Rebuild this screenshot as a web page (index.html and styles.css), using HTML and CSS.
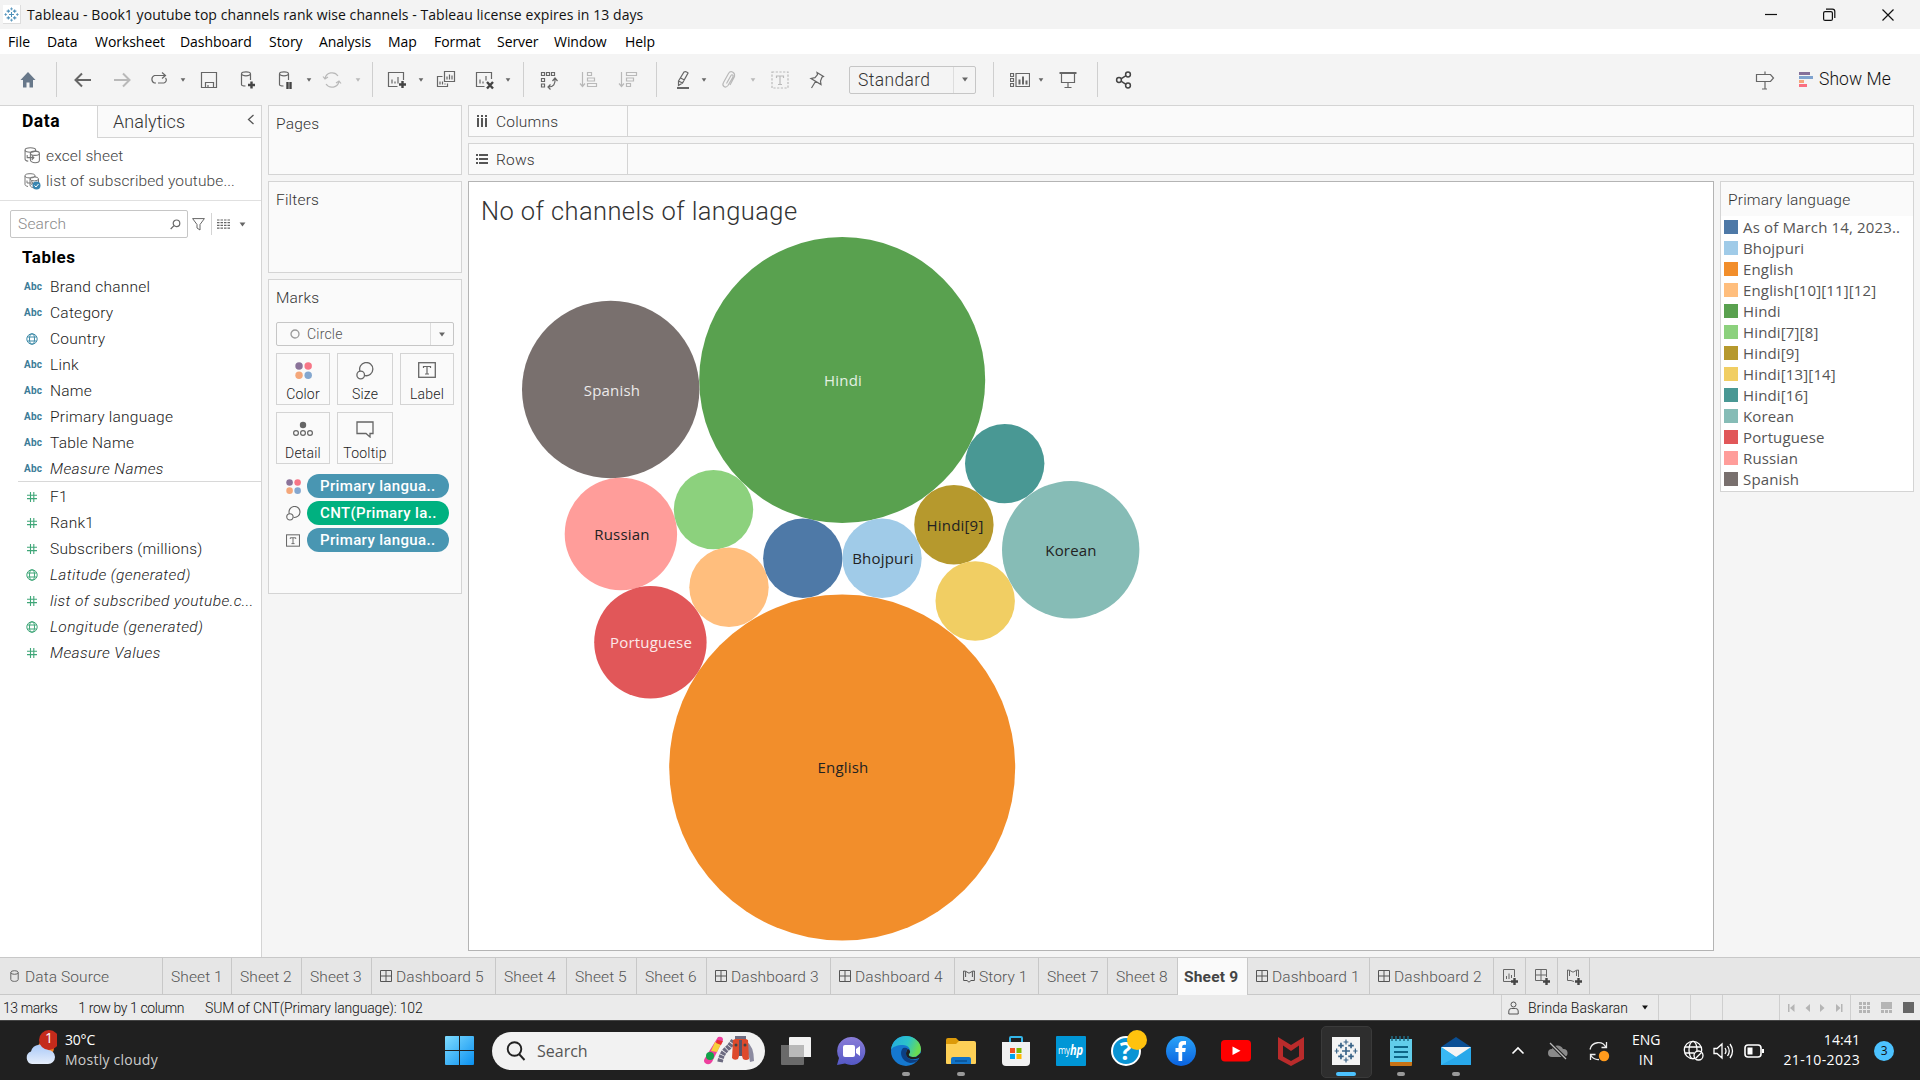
FILE: index.html
```html
<!DOCTYPE html>
<html lang="en">
<head>
<meta charset="utf-8">
<title>Tableau - Book1</title>
<link rel="stylesheet" href="styles.css">
</head>
<body>
<svg class="defs" width="0" height="0">
  <symbol id="caret" viewBox="0 0 8 6"><path d="M0.5 0.5h7L4 5.5z" fill="currentColor"/></symbol>
  <symbol id="logo" viewBox="0 0 20 20"><g stroke="currentColor" fill="none"><path stroke-width="1.4" d="M10 6.7v6.6M6.7 10h6.6M5.8 3.2v4.6M3.5 5.5h4.6M14.2 3.2v4.6M11.9 5.5h4.6M5.8 12.2v4.6M3.5 14.5h4.6M14.2 12.2v4.6M11.9 14.5h4.6"/><path stroke-width="1" d="M10 .5v4M8 2.5h4M10 15.5v4M8 17.5h4M2.2 8v4M.5 10h3.6M17.8 8v4M16 10h3.6"/></g></symbol>
  <symbol id="globe" viewBox="0 0 12 12"><g fill="none" stroke="currentColor"><circle cx="6" cy="6" r="5.2"/><ellipse cx="6" cy="6" rx="2.5" ry="5.2"/><path d="M1.4 4h9.2M1.4 8h9.2"/></g></symbol>
  <symbol id="hash" viewBox="0 0 12 12"><path d="M4.5 1v10M7.8 1v10M1 4.3h10M1 7.6h10" stroke="currentColor" stroke-width="1.1" fill="none"/></symbol>
  <symbol id="grid" viewBox="0 0 12 12"><path d="M.5.5h11v11H.5zM6 .5v11M.5 6h11" stroke="currentColor" fill="none"/></symbol>
  <symbol id="story" viewBox="0 0 12 13"><path d="M.6 10.500V1l2 .3V7M11.400 10.500V1l-2 .3V7M2.600 1.300L6 3.200l3.400-1.900M.6 10.500H4l2 1.700 2-1.700h3.400" stroke="currentColor" fill="none"/></symbol>
  <symbol id="size" viewBox="0 0 18 18"><g fill="none" stroke="currentColor" stroke-width="1.3"><path d="M4 9.300A6.600 6.600 0 1 1 9 13.600"/><circle cx="4.700" cy="13" r="3.800"/></g></symbol>
  <symbol id="tbox" viewBox="0 0 18 16"><rect x=".7" y=".7" width="16.600" height="14.600" fill="none" stroke="currentColor" stroke-width="1.300"/><path d="M5.500 6V4.500h7V6M9 4.500V12M7 12h4" stroke="currentColor" fill="none" stroke-width="1.200"/></symbol>
  <symbol id="dots" viewBox="0 0 16 16"><circle cx="3.800" cy="3.800" r="3.500" fill="#8a7399"/><circle cx="12.400" cy="3.800" r="3.500" fill="#f77687"/><circle cx="3.800" cy="12.400" r="3.500" fill="#f4a77a"/><circle cx="12.400" cy="12.400" r="3.500" fill="#84a7cf"/></symbol>
  <symbol id="ds" viewBox="0 0 16 16"><g fill="none" stroke="#777"><path d="M4 13.500C2 13 1 12.500 1 11.500V3M11 4V3"/><ellipse cx="6" cy="2.800" rx="5" ry="2.100"/><path d="M6 5.500v6.500c0 1.500 2 2.800 4.500 2.800s4-1 4-2.300V6"/><ellipse cx="10.300" cy="5.900" rx="4.200" ry="2"/><path d="M3 7.500v2.500h6M7.300 8l2 2-2 2"/></g></symbol>
</svg>

<header class="titlebar">
  <span class="applogo"><svg width="15" height="15"><use href="#logo"/></svg></span>
  <span class="apptitle">Tableau - Book1 youtube top channels rank wise channels - Tableau license expires in 13 days</span>
  <svg class="winbtns" width="130" height="14" viewBox="0 0 130 14" fill="none" stroke="#111" stroke-width="1.200"><path d="M0 6.500h12"/><rect x="58.600" y="3.600" width="8.800" height="8.800" rx="1.500"/><path d="M61 1.200h6.500q2.300 0 2.300 2.300V10"/><path d="M117.500 1.500l11 11M128.500 1.500l-11 11"/></svg>
</header>

<nav class="menubar">
  <span>File</span><span>Data</span><span>Worksheet</span><span>Dashboard</span><span>Story</span><span>Analysis</span><span>Map</span><span>Format</span><span>Server</span><span>Window</span><span>Help</span>
</nav>

<div class="toolbar">
  <svg class="ic g18"><path d="M10 2L2.500 10h2.500v7.500h3.500v-5h3v5H15V10h2.500z" fill="#68788a"/></svg>
  <i class="sep g18"></i>
  <svg class="ic g16 thick"><path d="M18 10H3M9 3.500L2.500 10 9 16.500"/></svg>
  <svg class="ic g19 thick off"><path d="M2 10h15M11 3.500l6.500 6.500-6.500 6.500"/></svg>
  <svg class="ic g17"><path d="M7 13H5.500a4 4 0 0 1 0-7.500H16M13 2.500l3.500 3-3.500 3M16.500 8a3 3 0 0 1-1.500 5H9"/></svg>
  <svg class="car g10"><use href="#caret"/></svg>
  <svg class="ic g12"><path d="M2.500 2.500h15v15h-15zM6.500 17.500v-5h8v5M9 17.500v-2.500"/></svg>
  <svg class="ic g19"><path d="M3.500 4v10.500c0 1 1.800 1.500 4 1.500M12.500 4v6"/><ellipse cx="8" cy="3.800" rx="4.500" ry="2"/><path class="bold" d="M13.500 11.500v7M10 15h7"/></svg>
  <svg class="ic g18"><path d="M3.500 4v10.500c0 1 1.800 1.500 4 1.500M12.500 4v6"/><ellipse cx="8" cy="3.800" rx="4.500" ry="2"/><path class="bold" d="M11.500 12v7M14.500 12v7"/></svg>
  <svg class="car g9"><use href="#caret"/></svg>
  <svg class="ic g9 off"><path d="M3 8.500a7.200 7.200 0 0 1 13-2.500M17 11.500a7.200 7.200 0 0 1-13 2.500M1 6.500l2 2.500 3-2M19 13.500L17 11l-3 2"/></svg>
  <svg class="car g12 off"><use href="#caret"/></svg>
  <i class="sep g10"></i>
  <svg class="ic g14"><path d="M10.500 16.500h-9v-14h15V10M5 13.500v-4M8 13.500v-2M11 13.500V7"/><path class="bold" d="M15.500 11v7M12 14.500h7"/></svg>
  <svg class="car g10"><use href="#caret"/></svg>
  <svg class="ic g11"><path d="M8.500 1.500h10v10h-10zM11 9.500v-3M13.500 9.500V4.500M16 9.500v-4M6.500 6.500h-5v10h10v-3M4 14.500v-3M6.500 14.500v-3M9 14.500v-1"/></svg>
  <svg class="ic g19"><path d="M9.500 16.500h-8v-14h15V9M5 13.500v-4M8 13.500v-2M11 10.500V6"/><path class="bold" d="M12 12l6 6.500M18 12l-6 6.500"/></svg>
  <svg class="car g9"><use href="#caret"/></svg>
  <i class="sep g11"></i>
  <svg class="ic g15"><path d="M2.500 2.500h3v3h-3zM7.500 2.500h3v3h-3zM12.500 2.500h3v3h-3zM2.500 8.500h3v3h-3zM2.500 14h3v3h-3zM9.500 17c5 0 7-3 6.500-8.500M13.500 11L16 8l2.500 3M11.500 14.500l-2.500 2.500 2.500 2.500"/></svg>
  <svg class="ic g20 off"><path d="M3.500 2v14M1 13.500L3.500 16.500 6 13.500M8.500 2.500h4v3h-4zM8.500 8h7v3h-7zM8.500 13.500h9v3h-9z"/></svg>
  <svg class="ic g19 off"><path d="M3.500 2v14M1 13.500L3.500 16.500 6 13.500M8.500 2.500h10v3h-10zM8.500 8h7v3h-7zM8.500 13.500h4v3h-4z"/></svg>
  <i class="sep g18"></i>
  <svg class="ic g16"><path d="M5.500 11L11 2q2-1 4 1L9.500 13l-4 2.500zM5.500 11l4 2M7.500 8l4 2"/><path d="M4 18h12" stroke-width="2"/></svg>
  <svg class="car g7"><use href="#caret"/></svg>
  <svg class="ic g11 off"><path d="M7.500 13.500l4.500-8q1-1.500 2 0v1.500L9 15.500q-2 2.500-4 1t-.5-4l5-9q1.500-2.500 4-1.500t2 4.500L11 15"/></svg>
  <svg class="car g10 off"><use href="#caret"/></svg>
  <svg class="ic g13 off"><path stroke-dasharray="2.200 1.500" d="M2 2h16v16H2z"/><path d="M6.500 8V6h7v2M10 6v8.500M8 14.500h4"/></svg>
  <svg class="ic g17"><path d="M10 2.500l6.500 4-1.500.8-1.500 3.700.5 3.500L4 8.500l4-.8 2.500-3zM8.500 11.500l-4 6.500"/></svg>
  <div class="combo g22"><span>Standard</span><svg class="car"><use href="#caret"/></svg></div>
  <i class="sep g17"></i>
  <svg class="ic g16"><path d="M.5 3.500h3v3h-3zM.5 8.500h3v3h-3zM.5 13.500h3v3h-3zM6 3.500h13.500v13H6z"/><path stroke-width="2" d="M9.500 14.500v-5M13 14.500V6.500M16.500 14.500v-4"/></svg>
  <svg class="car g7"><use href="#caret"/></svg>
  <svg class="ic g13"><path stroke-width="2" d="M1.500 3h17"/><path d="M3.500 3v9.500h13V3M10 12.500v5M6.500 17.500h7"/></svg>
  <i class="sep g19"></i>
  <svg class="ic g16 share"><circle cx="5" cy="10" r="2.400"/><circle cx="14" cy="4.500" r="2.400"/><circle cx="14" cy="15.500" r="2.400"/><path d="M7 8.800L12 5.700M7 11.200l5 3.100"/></svg>
  <svg class="ic guide"><path d="M1.500 4.500h14l3 3.500-3 3.500h-14zM10 1.500v3M10 11.500v8M7 19h5"/></svg>
  <svg class="g24" width="14" height="16"><path fill="#85709a" d="M0 0h11v3H0z"/><path fill="#7fa3cf" d="M0 4h14v3H0z"/><path fill="#f5a57a" d="M0 8h5v3H0z"/><path fill="#fa6f80" d="M0 12h8v3H0z"/></svg>
  <span class="showme">Show Me</span>
</div>

<main class="work">
  <aside class="datapane">
    <div class="tabs"><b>Data</b><span>Analytics<svg width="8" height="12"><path d="M6.500 1L1.500 5.500l5 4.500" fill="none" stroke="#555" stroke-width="1.300"/></svg></span></div>
    <div class="sources">
      <div><svg width="16" height="17" viewBox="0 0 16 16"><use href="#ds"/></svg>excel sheet</div>
      <div><svg width="17" height="17" viewBox="0 0 17 17"><use href="#ds" width="16" height="16"/><circle cx="12.500" cy="12.500" r="4" fill="#3a86b0"/><path d="M10.500 12.500l1.500 1.500 2.500-3" stroke="#fff" fill="none"/></svg>list of subscribed youtube...</div>
    </div>
    <div class="searchrow">
      <div class="search">Search<svg width="11" height="11"><circle cx="6.500" cy="4.300" r="3.300"/><path d="M4 6.700L.7 10"/></svg></div>
      <svg width="13" height="13"><path d="M.6.600h11.800L8 6.500V12L5 10V6.500z"/></svg>
      <i></i>
      <svg width="13" height="10"><path stroke-dasharray="2.500 1" stroke-width="1.200" d="M0 1h13M0 3.700h13M0 6.400h13M0 9.100h13"/></svg>
      <svg class="car"><use href="#caret"/></svg>
    </div>
    <h2>Tables</h2>
    <ul class="dims">
      <li><em>Abc</em>Brand channel</li>
      <li><em>Abc</em>Category</li>
      <li><svg><use href="#globe"/></svg>Country</li>
      <li><em>Abc</em>Link</li>
      <li><em>Abc</em>Name</li>
      <li><em>Abc</em>Primary language</li>
      <li><em>Abc</em>Table Name</li>
      <li class="gen"><em>Abc</em>Measure Names</li>
    </ul>
    <ul class="meas">
      <li><svg><use href="#hash"/></svg>F1</li>
      <li><svg><use href="#hash"/></svg>Rank1</li>
      <li><svg><use href="#hash"/></svg>Subscribers (millions)</li>
      <li class="gen"><svg><use href="#globe"/></svg>Latitude (generated)</li>
      <li class="gen"><svg><use href="#hash"/></svg>list of subscribed youtube.c...</li>
      <li class="gen"><svg><use href="#globe"/></svg>Longitude (generated)</li>
      <li class="gen"><svg><use href="#hash"/></svg>Measure Values</li>
    </ul>
  </aside>

  <section class="cards">
    <div class="card pages">Pages</div>
    <div class="card filters">Filters</div>
    <div class="card marks">
      Marks
      <div class="marktype"><svg width="10" height="10"><circle cx="5" cy="5" r="4" fill="none" stroke="#999" stroke-width="1.300"/></svg><span>Circle</span><svg class="car"><use href="#caret"/></svg></div>
      <div class="shelf">
        <div><svg width="17" height="17"><use href="#dots"/></svg>Color</div>
        <div><svg width="18" height="18"><use href="#size"/></svg>Size</div>
        <div><svg width="18" height="16"><use href="#tbox"/></svg>Label</div>
        <div><svg width="20" height="16"><circle cx="10" cy="4" r="3.200" fill="#666"/><g fill="none" stroke="#666" stroke-width="1.200"><circle cx="3" cy="12" r="2.400"/><circle cx="10" cy="12" r="2.400"/><circle cx="17" cy="12" r="2.400"/></g></svg>Detail</div>
        <div><svg width="18" height="17"><path d="M1 1h16v11.500h-3V16l-4-3.500H1z" fill="none" stroke="#666" stroke-width="1.300"/></svg>Tooltip</div>
      </div>
      <div class="pills">
        <div><svg width="15" height="15"><use href="#dots"/></svg><span>Primary langua..</span></div>
        <div><svg width="15" height="15"><use href="#size"/></svg><span class="green">CNT(Primary la..</span></div>
        <div><svg width="14" height="13"><use href="#tbox"/></svg><span>Primary langua..</span></div>
      </div>
    </div>
  </section>

  <section class="stage">
    <div class="axis"><b><svg width="12" height="12"><path fill="#555" d="M1 0h2v2H1zM5 0h2v2H5zM9 0h2v2H9zM1 3h2v9H1zM5 3h2v9H5zM9 3h2v9H9z"/></svg>Columns</b></div>
    <div class="axis"><b><svg width="12" height="12"><path fill="#555" d="M0 1h2v2H0zM0 5h2v2H0zM0 9h2v2H0zM3 1h9v2H3zM3 5h9v2H3zM3 9h9v2H3z"/></svg>Rows</b></div>
    <div class="row">
      <div class="view">
        <h1>No of channels of language</h1>
        <svg class="bubbles" width="1244" height="713" viewBox="469 237 1244 713">
          <circle cx="842.200" cy="380" r="143" fill="#59a14f"/>
          <circle cx="842.200" cy="767.500" r="173" fill="#f28e2b"/>
          <circle cx="610.700" cy="389.500" r="88.700" fill="#79706e"/>
          <circle cx="620.900" cy="534" r="56.200" fill="#ff9d9a"/>
          <circle cx="650.400" cy="642.300" r="56.200" fill="#e15759"/>
          <circle cx="713.500" cy="509.600" r="39.700" fill="#8cd17d"/>
          <circle cx="729" cy="587.300" r="39.700" fill="#ffbe7d"/>
          <circle cx="802.800" cy="558.300" r="39.700" fill="#4e79a7"/>
          <circle cx="882" cy="558.300" r="39.700" fill="#a0cbe8"/>
          <circle cx="953.900" cy="524.700" r="39.700" fill="#b6992d"/>
          <circle cx="975.200" cy="601" r="39.700" fill="#f1ce63"/>
          <circle cx="1004.700" cy="463.600" r="39.700" fill="#499894"/>
          <circle cx="1070.700" cy="549.800" r="68.700" fill="#86bcb6"/>
          <g class="lbl">
            <text x="843" y="386" fill="#e4f0e3">Hindi</text>
            <text x="612" y="396" fill="#eceaea">Spanish</text>
            <text x="651" y="648" fill="#fce9e9">Portuguese</text>
            <text x="622" y="540">Russian</text>
            <text x="883" y="564">Bhojpuri</text>
            <text x="955" y="531">Hindi[9]</text>
            <text x="1071" y="556">Korean</text>
            <text x="843" y="773">English</text>
          </g>
        </svg>
      </div>
      <aside class="legend">
        <h3>Primary language</h3>
        <ul>
          <li><i class="c1"></i>As of March 14, 2023..</li>
          <li><i class="c2"></i>Bhojpuri</li>
          <li><i class="c3"></i>English</li>
          <li><i class="c4"></i>English[10][11][12]</li>
          <li><i class="c5"></i>Hindi</li>
          <li><i class="c6"></i>Hindi[7][8]</li>
          <li><i class="c7"></i>Hindi[9]</li>
          <li><i class="c8"></i>Hindi[13][14]</li>
          <li><i class="c9"></i>Hindi[16]</li>
          <li><i class="c10"></i>Korean</li>
          <li><i class="c11"></i>Portuguese</li>
          <li><i class="c12"></i>Russian</li>
          <li><i class="c13"></i>Spanish</li>
        </ul>
      </aside>
    </div>
  </section>
</main>

<div class="sheets">
  <span class="first"><svg width="9" height="12"><g fill="none" stroke="#666"><ellipse cx="4.500" cy="2.500" rx="3.700" ry="1.800"/><path d="M.8 2.500v7c0 2.500 7.400 2.500 7.400 0v-7"/></g></svg>Data Source</span>
  <span>Sheet 1</span><span>Sheet 2</span><span>Sheet 3</span>
  <span><svg width="12" height="12"><use href="#grid"/></svg>Dashboard 5</span>
  <span>Sheet 4</span><span>Sheet 5</span><span>Sheet 6</span>
  <span><svg width="12" height="12"><use href="#grid"/></svg>Dashboard 3</span>
  <span><svg width="12" height="12"><use href="#grid"/></svg>Dashboard 4</span>
  <span><svg width="12" height="13"><use href="#story"/></svg>Story 1</span>
  <span>Sheet 7</span><span>Sheet 8</span><span class="active">Sheet 9</span>
  <span><svg width="12" height="12"><use href="#grid"/></svg>Dashboard 1</span>
  <span><svg width="12" height="12"><use href="#grid"/></svg>Dashboard 2</span>
  <span class="add"><svg width="16" height="16"><path d="M8.500 12.500h-8v-12h11V8M3.500 10V7M6 10V4.500M8.500 9V6"/><path class="bold" d="M11.500 9v7M8 12.500h7"/></svg></span>
  <span class="add"><svg width="16" height="16"><path d="M8 11.500H.5V.5h11V8M6 .5v11M.5 6h11"/><path class="bold" d="M11.500 9v7M8 12.500h7"/></svg></span>
  <span class="add"><svg width="16" height="16"><path d="M7 12.500L4 11.500H.5V1l2 .3V7M2.500 1.300L6 3.200l3.500-1.900V7M9.500 1.300l2-.3v7"/><path class="bold" d="M11.500 9v7M8 12.500h7"/></svg></span>
</div>

<div class="status">
  <span>13 marks</span><span>1 row by 1 column</span><span class="sum">SUM of CNT(Primary language): 102</span>
  <div class="user"><svg width="11" height="14"><g fill="none" stroke="#555"><circle cx="5.500" cy="3.500" r="2.500"/><path d="M.8 13V10q0-2.500 2.500-2.500h4.400q2.500 0 2.500 2.500v3z"/></g></svg>Brinda Baskaran<svg class="car"><use href="#caret"/></svg></div>
  <i></i><i></i><i class="wide"></i>
  <div class="nav"><svg width="60" height="8" viewBox="0 0 60 8" fill="#b5b5b5"><path d="M0 0h1.500v8H0zM6.500 0v8L2 4zM22 0v8L17.500 4zM32 0v8l4.500-4zM48 0v8l4.500-4zM53 0h1.500v8H53z"/></svg></div>
  <div class="modes"><svg width="56" height="11" viewBox="0 0 56 11"><path fill="#b5b5b5" d="M0 0h3v3H0zM4 0h3v3H4zM8 0h3v3H8zM0 4h3v3H0zM4 4h3v3H4zM8 4h3v3H8zM0 8h3v3H0zM4 8h3v3H4zM8 8h3v3H8zM22 0h11v7H22zM22 8h3v3h-3zM26 8h3v3h-3zM30 8h3v3h-3z"/><path fill="#666" d="M44 0h11v11H44z"/></svg></div>
</div>

<footer class="taskbar">
  <div class="weather">
    <svg width="32" height="38" viewBox="0 0 32 38"><defs><linearGradient id="cl" x2="0" y2="1"><stop offset="0" stop-color="#a9c9f8"/><stop offset="1" stop-color="#e6eefb"/></linearGradient></defs><circle cx="21" cy="18" r="8" fill="#f58220"/><path d="M7 34a6.500 6.500 0 0 1-1-12.500 9 9 0 0 1 17-1.500 7 7 0 0 1 0 14z" fill="url(#cl)"/><circle cx="24" cy="10" r="10" fill="#c42b1c"/><text x="24" y="13" text-anchor="middle" fill="#fff" font-size="14">1</text></svg>
    <p>30°C<br><span>Mostly cloudy</span></p>
  </div>
  <svg class="start" width="29" height="29"><defs><linearGradient id="wn" x2="1" y2="1"><stop offset="0" stop-color="#7fdcff"/><stop offset="1" stop-color="#0a90f0"/></linearGradient></defs><path fill="url(#wn)" d="M0 1q0-1 1-1h13v14H0zM15 0h13q1 0 1 1v13H15zM0 15h14v14H1q-1 0-1-1zM15 15h14v13q0 1-1 1H15z"/></svg>
  <div class="tsearch">
    <svg width="20" height="20" fill="none" stroke="#222" stroke-width="1.900"><circle cx="8.500" cy="8" r="6.800"/><path d="M13 13l5.500 6"/></svg><span>Search</span>
    <svg width="54" height="30" viewBox="0 0 54 30"><path d="M15 1q5-1 5 3L9 26q-3 4-7 1-2-2 0-5z" fill="#ee3f9e"/><path d="M12 6l6 2-4 8-6-1z" fill="#f6d13c"/><circle cx="7" cy="20" r="4" fill="#12a24a"/><path d="M14 4l6 1-2 4-5-2z" fill="#e83030"/><path d="M17 26q2-10 9-15l5-7" stroke="#6b6a80" stroke-width="5.500" fill="none" stroke-dasharray="3 .8"/><path d="M43 5q8 5 8 20l-4 1q-1-9-6-13z" fill="#8c8ba0"/><path d="M30 4q8-5 15 0l1 19q-3 2-6 0l-1-3h-3l-1 3q-4 2-6-1z" fill="#de4a2c"/><path d="M37.500 4v16" stroke="#5a5468" stroke-width="3"/><path d="M32 1.500h11" stroke="#6f6d82" stroke-width="3"/><circle cx="33" cy="9" r="1.500" fill="#444"/><circle cx="42" cy="9" r="1.500" fill="#444"/></svg>
  </div>
  <div class="apps">
    <div><svg viewBox="0 0 30 30"><path d="M0 9h23v19q0 1-1 1H1q-1 0-1-1z" fill="#6a6a6a"/><path d="M8 2q0-1 1-1h20q1 0 1 1v19H8z" fill="#f2f2f2"/><path d="M8 9h15v12H8z" fill="#b9b9b9"/></svg></div>
    <div><svg viewBox="0 0 30 30"><defs><linearGradient id="ch" x2="0" y2="1"><stop offset="0" stop-color="#8a7dd8"/><stop offset="1" stop-color="#5458c5"/></linearGradient></defs><path d="M15 1a14 14 0 1 1-6 26.500L1 29l2-7A14 14 0 0 1 15 1z" fill="url(#ch)"/><rect x="7" y="9" width="12" height="12" rx="2" fill="#fff"/><path d="M20 13l4-3v10l-4-3z" fill="#fff"/></svg></div>
    <div class="run"><svg viewBox="0 0 30 30"><defs><linearGradient id="e1" x2="1" y2=".3"><stop offset="0" stop-color="#23a9e2"/><stop offset=".6" stop-color="#2cc4c9"/><stop offset="1" stop-color="#6adb52"/></linearGradient></defs><circle cx="15" cy="15" r="15" fill="#1578cf"/><path d="M0 14C1 5 7 0 15 0s15 6 15 13c0 5-4 8-8 8-3 0-5-1-4-3 3-5-1-9-6-9C6 9 1 11 0 14z" fill="url(#e1)"/><path d="M12 12c-4 4-2 13 7 15 4 0 6-1 9-4-5 2-13 1-13-6 0-2 1-3 2-4q-2-2-5-1z" fill="#0c3f83"/><path d="M17 13c-3 3-3 9 3 10 4 1 8-1 10-2l2-6-7 6c-3 0-8 0-7-3 2-2 1-4-1-5z" fill="#202020"/></svg></div>
    <div class="run"><svg viewBox="0 0 30 30"><path d="M0 4q0-2 2-2h8l3 3v6H0z" fill="#dc9a0a"/><path d="M0 8l10 0 3-3h15q2 0 2 2v20q0 1-1 1H1q-1 0-1-1z" fill="#fdd057"/><path d="M5 28v-5q0-2 2-2h16q2 0 2 2v5z" fill="#1173c7"/><path d="M9 25h12" stroke="#0a4f91" stroke-width="1.500"/></svg></div>
    <div><svg viewBox="0 0 30 30"><path d="M9 7V2q0-1 1-1h10q1 0 1 1v5" stroke="#33b5e8" stroke-width="2" fill="none"/><path d="M1 6h28v20q0 4-4 4H5q-4 0-4-4z" fill="#f1f1f1"/><path fill="#f25022" d="M9 12h5v5H9z"/><path fill="#7fba00" d="M15.500 12h5v5h-5z"/><path fill="#00a4ef" d="M9 18h5v5H9z"/><path fill="#ffb900" d="M15.500 18h5v5h-5z"/></svg></div>
    <div><svg viewBox="0 0 30 30"><rect width="30" height="30" rx="1" fill="#0096d6"/><text x="2" y="18" font-size="10" fill="#fff" textLength="12" lengthAdjust="spacingAndGlyphs">my</text><text x="14" y="19" font-size="14" font-weight="700" font-style="italic" fill="#fff" textLength="13" lengthAdjust="spacingAndGlyphs">hp</text></svg></div>
    <div><svg viewBox="0 0 30 30" overflow="visible"><circle cx="15" cy="15" r="14" fill="#0a94d4" stroke="#fff" stroke-width="2"/><text x="14.500" y="24" font-size="25" font-weight="700" text-anchor="middle" fill="#fff">?</text><circle cx="26" cy="4" r="10" fill="#ffc20e"/></svg></div>
    <div><svg viewBox="0 0 30 30"><defs><linearGradient id="fb" x2="0" y2="1"><stop offset="0" stop-color="#2aa4f8"/><stop offset="1" stop-color="#0a62e0"/></linearGradient></defs><circle cx="15" cy="15" r="15" fill="url(#fb)"/><path d="M12.500 25v-9H9.500v-4h3V9.500q0-4.500 4.500-4.500h3v3.800h-2q-1.800 0-1.800 1.700V12h3.600l-.6 4h-3v9z" fill="#fff"/></svg></div>
    <div><svg viewBox="0 0 30 30"><rect y="4" width="30" height="21.500" rx="4" fill="#f00"/><path d="M11.500 10.500v8.500l8-4.200z" fill="#fff"/></svg></div>
    <div><svg viewBox="0 0 30 30"><path d="M2 1l13 8 13-8v22L15 30 2 23zM7 9.500v11L15 25l8-4.500v-11L15 15z" fill="#b92b2b" fill-rule="evenodd"/></svg></div>
    <div class="on"><svg viewBox="0 0 30 30"><path d="M1 1h28v28H1z" fill="#f4f4f4"/><svg x="3" y="3" width="24" height="24" color="#3a6488"><use href="#logo"/></svg></svg></div>
    <div class="run"><svg viewBox="0 0 30 30"><path d="M4 3h22v24H4z" fill="#62cdea"/><path d="M4 26h22v3q0 1-1 1H5q-1 0-1-1z" fill="#c87316"/><path d="M8 11h14M8 16h14M8 21h14" stroke="#0d6688" stroke-width="2"/><path d="M6 0v5M10 0v5M14 0v5M18 0v5M22 0v5" stroke="#1f6c86" stroke-width="1.500"/></svg></div>
    <div class="run"><svg viewBox="0 0 30 30"><path d="M0 11L15 1l15 10v5H0z" fill="#0a4f94"/><path d="M0 11h30v18H0z" fill="#28a8ea"/><path d="M0 11h30L15 21z" fill="#f4f4f4"/><path d="M0 11l15 10L0 29z" fill="#38b8f4"/></svg></div>
  </div>
  <div class="tray">
    <svg class="t1" width="14" height="9"><path d="M1.500 7.500L7 2l5.500 5.500" fill="none" stroke="#fff" stroke-width="1.600"/></svg>
    <svg class="t2" width="22" height="18"><path d="M5 15a4 4 0 0 1 0-8 6 6 0 0 1 11 0 4 4 0 0 1 1 8z" fill="#8a8a8a"/><path d="M3 1l16 16" stroke="#202020" stroke-width="3.500"/><path d="M3 1l16 16" stroke="#bbb" stroke-width="1.200"/></svg>
    <svg class="t3" width="22" height="22"><path d="M2 9.500a8.500 8.500 0 0 1 16-2M18.500 2v5.500h-5M11 19.500a8.500 8.500 0 0 1-8-4M2.500 20v-5.500h5" fill="none" stroke="#eee" stroke-width="1.300"/><circle cx="16" cy="16" r="5.200" fill="#ff9a1c"/></svg>
    <p class="lang">ENG<br>IN</p>
    <svg class="t4" width="22" height="22" fill="none" stroke="#fff" stroke-width="1.300"><circle cx="10" cy="10" r="8.700"/><ellipse cx="10" cy="10" rx="4" ry="8.700"/><path d="M2 7h16M2 13h9"/><circle cx="15.500" cy="15.500" r="4.500" fill="#202020"/><path d="M12.500 18.500l6-6"/></svg>
    <svg class="t5" width="21" height="18" fill="none" stroke="#fff" stroke-width="1.300"><path d="M1 6.500h3l5-4.500v14l-5-4.500H1zM12 6q2 3 0 6M14.500 4q3.500 5 0 10M17 2q5 7 0 14"/></svg>
    <svg class="t6" width="21" height="14"><rect x="1" y="1" width="16" height="12" rx="3" fill="none" stroke="#fff" stroke-width="1.600"/><path d="M3.500 3.500h5v7h-5zM18 5h2v4h-2z" fill="#fff"/></svg>
    <p class="clock">14:41<br><span>21-10-2023</span></p>
    <span class="count">3</span>
  </div>
</footer>
</body>
</html>
```
FILE: styles.css
```css
* { box-sizing: border-box; }
body { margin: 0; width: 1920px; height: 1080px; overflow: hidden; background: #f5f5f5; color: #333; font: 300 15px/20px Roboto, "Open Sans", sans-serif; letter-spacing: .2px; white-space: nowrap; display: flex; flex-direction: column; }
h1, h2, h3, p, ul { margin: 0; padding: 0; list-style: none; }
svg { display: block; flex: none; }
.defs { position: absolute; }

.titlebar { height: 29px; background: #f3f3f3; display: flex; align-items: center; padding: 0 25px 0 3px; color: #111; font: 400 14px/20px "Open Sans", sans-serif; letter-spacing: .07px; }
.applogo { width: 18px; height: 19px; background: #fff; border: 1px solid #ddd; border-width: 0 1px 1px 0; color: #4b8fb8; padding: 2px 1px; margin-right: 6px; }
.winbtns { margin-left: auto; }
.menubar { height: 25px; background: #fff; display: grid; grid-template-columns: 39px 48px 85px 89px 50px 69px 46px 63px 57px 71px 60px; padding: 1px 0 0 8px; align-items: center; color: #000; font: 400 14px/20px "Open Sans", sans-serif; letter-spacing: -.05px; }

.toolbar { height: 51px; display: flex; align-items: center; padding-right: 30px; color: #666; background: #f4f4f4; }
.ic { width: 20px; height: 20px; fill: none; stroke: currentColor; stroke-width: 1.2; }
.ic path[fill] { stroke: none; }
.thick { stroke-width: 2; }
.off { color: #b9b9b9; }
.bold { stroke: #444; stroke-width: 2.4; fill: none; }
.car { width: 8px; height: 5px; color: #666; }
.toolbar > .car { width: 8px; height: 4px; }
.toolbar > .off { color: #b9b9b9; }
.sep { width: 1px; height: 35px; background: #cfcfcf; }
.g7 { margin-left: 7px; } .g9 { margin-left: 9px; } .g10 { margin-left: 10px; } .g11 { margin-left: 11px; } .g12 { margin-left: 12px; } .g13 { margin-left: 13px; } .g14 { margin-left: 14px; } .g15 { margin-left: 15px; } .g16 { margin-left: 16px; } .g17 { margin-left: 17px; } .g18 { margin-left: 18px; } .g19 { margin-left: 19px; } .g20 { margin-left: 20px; } .g22 { margin-left: 22px; } .g24 { margin-left: 24px; }
.share { color: #444; stroke-width: 1.5; }
.guide { margin-left: auto; }
.combo { width: 127px; height: 28px; border: 1px solid #c6c6c6; border-radius: 2px; display: flex; align-items: center; color: #333; font-size: 17.5px; }
.combo span { width: 104px; height: 26px; line-height: 26px; border-right: 1px solid #ddd; padding-left: 8px; margin-right: 7px; letter-spacing: .35px; }
.showme { margin-left: 6px; color: #111; font-size: 17.5px; width: 71px; letter-spacing: .05px; padding-bottom: 1px; }

.work { height: 852px; display: flex; gap: 6px; padding-right: 6px; }
.datapane { width: 262px; background: #fff; border: 1px solid #d4d4d4; border-width: 1px 1px 0 0; color: #1a1a1a; }
.tabs { display: flex; height: 32px; font-size: 18px; line-height: 31px; }
.tabs b { width: 97px; padding-left: 22px; font-weight: 700; color: #000; font-size: 17.5px; line-height: 30px; letter-spacing: .5px; }
.tabs span { flex: 1; background: #fafafa; border: 1px solid #d4d4d4; border-width: 0 0 1px 1px; padding: 0 6px 0 15px; display: flex; justify-content: space-between; align-items: center; line-height: 32px; color: #333; letter-spacing: .05px; }
.tabs svg { margin-bottom: 3px; }
.sources { height: 63px; border-bottom: 1px solid #e0e0e0; padding: 5px 0 0 24px; color: #444; font-size: 15.5px; }
.sources div { display: flex; align-items: center; gap: 5px; height: 25.5px; letter-spacing: .12px; }
.sources svg { width: 17px; }
.searchrow { display: flex; align-items: center; height: 28px; margin: 9px 0 0 10px; }
.searchrow svg { fill: none; stroke: #666; }
.searchrow .car { stroke: none; margin-left: 9px; width: 7px; }
.search { width: 178px; height: 28px; border: 1px solid #c6c6c6; border-radius: 2px; padding: 0 6px 0 7px; display: flex; justify-content: space-between; align-items: center; color: #8a8a8a; font-size: 15.5px; margin-right: 4px; }
.search svg { stroke-width: 1.2; }
.searchrow i { width: 1px; height: 22px; background: #d4d4d4; margin: 0 5px 0 6px; }
h2 { font-size: 17px; font-weight: 700; color: #000; padding-left: 22px; line-height: 20px; margin: 9px 0 7px; letter-spacing: .5px; }
.datapane li { height: 26px; display: flex; align-items: center; padding-left: 24px; letter-spacing: .25px; font-size: 15.5px; }
.datapane li svg { width: 12px; height: 12px; margin: 0 12px 0 2px; color: #3f8ba8; }
.datapane li em { width: 26px; font: 700 10px/20px Roboto, sans-serif; letter-spacing: .2px; color: #3b7c97; }
.meas { border-top: 1px solid #d8d8d8; margin-left: 18px; margin-top: -1px; padding-top: 2px; }
.datapane .meas li { padding-left: 6px; }
.datapane .meas svg { color: #3fa678; }
.datapane .gen { font-style: italic; letter-spacing: .4px; }

.cards { width: 194px; display: flex; flex-direction: column; gap: 6px; }
.card { background: #fafafa; border: 1px solid #d4d4d4; padding: 7px 7px; font-size: 15.5px; }
.pages { height: 70px; padding-top: 8px; }
.filters { height: 92px; padding-top: 8px; }
.marks { height: 315px; padding-top: 8px; }
.marktype { height: 24px; border: 1px solid #c6c6c6; border-radius: 2px; margin-top: 14px; display: flex; align-items: center; padding-left: 13px; font-size: 14px; color: #555; }
.marktype span { flex: 1; margin-left: 7px; border-right: 1px solid #ddd; line-height: 22px; margin-right: 7px; }
.marktype .car { margin-right: 7px; }
.shelf { display: grid; grid-template-columns: 54px 56px 54px; gap: 7px; margin-top: 7px; font-size: 14px; color: #222; }
.shelf div { height: 52px; border: 1px solid #d4d4d4; display: flex; flex-direction: column; align-items: center; justify-content: space-between; padding: 8px 0 0; color: #222; }
.shelf svg { color: #666; }
.pills { margin-top: 10px; display: grid; gap: 3px; }
.pills div { height: 24px; display: grid; grid-template-columns: 31px 142px; align-items: center; color: #666; }
.pills svg { margin-left: 10px; }
.pills span { height: 24px; border-radius: 12px; background: #4996b2; color: #fff; font-weight: 500; font-size: 15px; line-height: 25px; padding-left: 13px; letter-spacing: .35px; }
.pills .green { background: #00b180; }

.stage { flex: 1; display: flex; flex-direction: column; gap: 6px; }
.axis { height: 32px; border: 1px solid #d4d4d4; background: #fafafa; display: flex; }
.axis b { width: 159px; border-right: 1px solid #d4d4d4; font-weight: 300; font-size: 15.5px; display: flex; align-items: center; padding-left: 7px; gap: 8px; line-height: 32px; padding-top: 1px; }
.axis svg { margin-bottom: 2px; }
.row { display: flex; gap: 6px; align-items: flex-start; }
.view { width: 1246px; height: 770px; background: #fff; border: 1px solid #b4b4b4; }
h1 { height: 55px; font-size: 25.5px; font-weight: 300; line-height: 58px; padding-left: 12px; letter-spacing: .4px; }
.lbl { font-size: 15px; font-weight: 400; letter-spacing: .2px; text-anchor: middle; fill: #222; font-family: "Open Sans", sans-serif; }
.legend { width: 194px; height: 311px; border: 1px solid #d4d4d4; background: #fff; }
h3 { height: 34px; background: #fafafa; font-size: 15.5px; font-weight: 300; line-height: 36px; padding-left: 7px; }
.legend li { height: 21px; display: flex; align-items: center; gap: 5px; padding-left: 3px; font-size: 15px; font-weight: 400; font-family: "Open Sans", sans-serif; color: #555; letter-spacing: .15px; }
.legend i { width: 14px; height: 14px; }
.c1 { background: #4e79a7; } .c2 { background: #a0cbe8; } .c3 { background: #f28e2b; } .c4 { background: #ffbe7d; } .c5 { background: #59a14f; } .c6 { background: #8cd17d; } .c7 { background: #b6992d; } .c8 { background: #f1ce63; } .c9 { background: #499894; } .c10 { background: #86bcb6; } .c11 { background: #e15759; } .c12 { background: #ff9d9a; } .c13 { background: #79706e; }

.sheets { height: 38px; background: #e6e6e6; border: 1px solid #c8c8c8; border-width: 1px 0; display: grid; grid-template-columns: 163px 69px 70px 70px 124px 71px 70px 70px 124px 124px 84px 69px 70px 70px 122px 124px 32px 32px 32px; color: #555; font-size: 15.5px; line-height: 36px; letter-spacing: .1px; }
.sheets span { border-right: 1px solid #c8c8c8; padding: 1px 0 0 8px; display: flex; align-items: center; gap: 4px; }
.sheets .first { padding-left: 10px; gap: 6px; }
.sheets .active { background: #fafafa; font-weight: 700; color: #444; padding-left: 6px; letter-spacing: .2px; padding-top: 0; }
.sheets .add { padding-left: 9px; }
.sheets svg { margin-bottom: 2px; }
.add svg { fill: none; stroke: #666; margin-bottom: 0; }
.status { height: 25px; background: #ebebeb; display: flex; align-items: center; color: #111; font-size: 14px; letter-spacing: -.4px; padding-left: 3px; gap: 21px; }
.status .sum { letter-spacing: -.15px; }
.status .user { margin-left: auto; letter-spacing: 0; }
.status .user, .status i, .nav, .modes { height: 25px; border-left: 1px solid #cfcfcf; margin-right: -21px; display: flex; align-items: center; }
.user { width: 157px; padding-left: 6px; gap: 9px; }
.user .car { margin-left: auto; margin-right: 9px; color: #111; }
.status i { width: 32px; }
.status i.wide { width: 57px; }
.nav { width: 71px; padding-left: 8px; }
.status .modes { width: 70px; padding-left: 8px; margin-right: 0; }

.taskbar { height: 60px; background: #202020; border-top: 1px solid #444; display: flex; align-items: center; color: #fff; font: 400 14px/20px "Open Sans", sans-serif; letter-spacing: -.2px; padding-left: 25px; }
.taskbar p { padding-bottom: 2px; }
.weather { width: 420px; display: flex; gap: 8px; align-items: center; }
.weather svg { margin-bottom: 4px; }
.weather span { color: #ccc; letter-spacing: .25px; }
.tsearch { width: 273px; height: 38px; border-radius: 19px; background: #f2f2f2; margin-left: 18px; display: flex; align-items: center; padding: 0 8px 0 14px; gap: 11px; color: #555; font-size: 16px; }
.tsearch span { flex: 1; letter-spacing: 0; }
.apps { display: flex; margin-left: 3px; }
.apps div { width: 55px; height: 60px; display: grid; place-items: center; position: relative; }
.apps svg { width: 30px; height: 30px; }
.apps .run::after { content: ""; position: absolute; width: 8px; height: 4px; border-radius: 2px; background: #999; top: 51px; left: 24px; }
.apps .on::before { content: ""; position: absolute; width: 49px; height: 50px; border-radius: 5px; background: #2e2e2e; border: 1px solid #3a3a3a; top: 5px; left: 3px; }
.apps .on::after { content: ""; position: absolute; width: 20px; height: 4px; border-radius: 2px; background: #4cc2ff; top: 51px; left: 18px; }
.on svg { position: relative; }
.apps .on svg svg { width: 24px; height: 24px; }
.tray { flex: 1; display: flex; align-items: center; padding-left: 28px; }
.t2 { margin-left: 22px; } .t3 { margin-left: 19px; }
.lang { width: 28px; margin-left: 22px; text-align: center; letter-spacing: 0; }
.t4 { margin-left: 23px; } .t5 { margin-left: 8px; } .t6 { margin-left: 10px; }
.clock { width: 95px; text-align: right; letter-spacing: .1px; }
.clock span { letter-spacing: .35px; }
.count { width: 20px; height: 20px; border-radius: 50%; background: #4cc2ff; color: #111; font-size: 12px; text-align: center; margin-left: 14px; }
```
